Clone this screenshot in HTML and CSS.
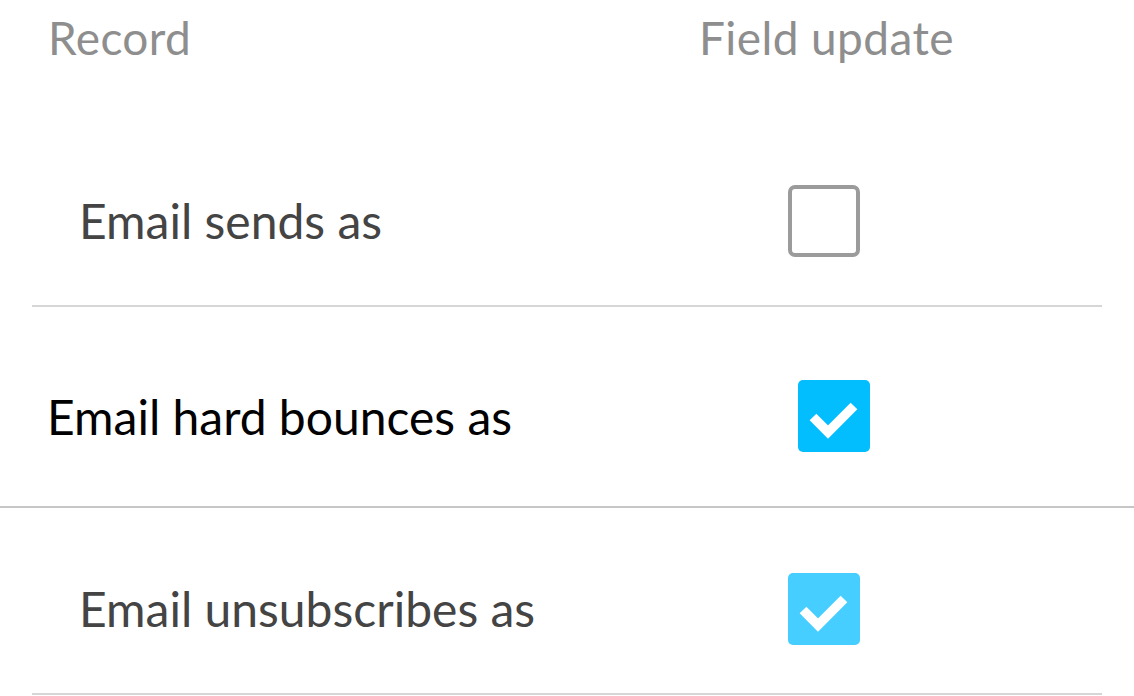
FILE: index.html
```html
<!DOCTYPE html>
<html lang="en">
<head>
  <meta charset="UTF-8">
  <title>Field updates</title>
  <link rel="stylesheet" href="styles.css">
</head>
<body>

  <div class="list">
    <div class="head">
      <span>Record</span>
      <span>Field update</span>
    </div>

    <div class="row">
      <span class="label">Email sends as</span>
      <span class="box"></span>
    </div>

    <div class="row dragging">
      <span class="label">Email hard bounces as</span>
      <span class="box checked">
        <svg viewBox="0 0 72 72"><polyline points="15,37 30,52 56,26"/></svg>
      </span>
    </div>

    <div class="row">
      <span class="label">Email unsubscribes as</span>
      <span class="box checked light">
        <svg viewBox="0 0 72 72"><polyline points="15,37 30,52 56,26"/></svg>
      </span>
    </div>
  </div>

</body>
</html>
```

FILE: styles.css
```css
body { margin: 0; font-family: Lato, "Noto Sans", sans-serif; background: #fff; overflow: hidden; }
.list { margin-left: 32px; width: 1070px; }
.head { height: 113px; box-sizing: border-box; display: grid; grid-template-columns: 651px 1fr; padding-left: 16px; padding-top: 10px; font-size: 46px; letter-spacing: 0.4px; color: #8e8e8e; }
.row { height: 194px; box-sizing: border-box; border-bottom: 2px solid #d6d6d6; display: grid; grid-template-columns: 709px 72px; align-items: center; padding-left: 47px; padding-top: 23px; }
.label { font-size: 48px; color: #444; }
.dragging { height: 201px; margin-left: -32px; width: 1134px; padding-left: 47px; padding-top: 19px; grid-template-columns: 751px 72px; border-bottom-color: #c6c6c6; margin-bottom: -7px; position: relative; background: #fff; }
.dragging .label { color: #000; }
.box { width: 72px; height: 72px; box-sizing: border-box; border: 4px solid #9b9b9b; border-radius: 7px; display: block; }
.box.checked { border: none; background: #03befe; border-radius: 5px; }
.box.light { background: #45ceff; }
.box svg { display: block; width: 72px; height: 72px; }
.box polyline { fill: none; stroke: #fff; stroke-width: 9.5; stroke-linejoin: miter; }
```
